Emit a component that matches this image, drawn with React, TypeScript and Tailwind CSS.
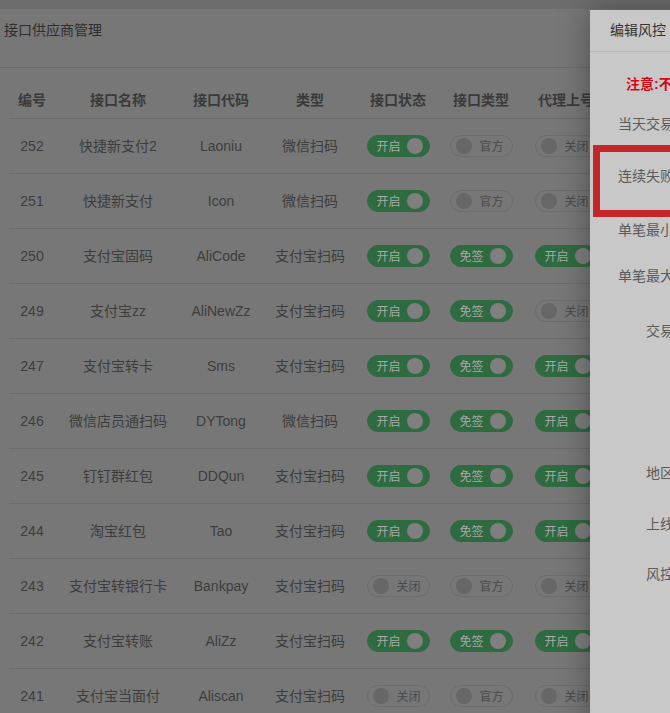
import React from "react";

type Row = {
  id: string;
  name: string;
  code: string;
  type: string;
  status: boolean;
  kind: boolean;
  agent: boolean;
};

const rows: Row[] = [
  { id: "252", name: "快捷新支付2", code: "Laoniu", type: "微信扫码", status: true, kind: false, agent: false },
  { id: "251", name: "快捷新支付", code: "Icon", type: "微信扫码", status: true, kind: false, agent: false },
  { id: "250", name: "支付宝固码", code: "AliCode", type: "支付宝扫码", status: true, kind: true, agent: true },
  { id: "249", name: "支付宝zz", code: "AliNewZz", type: "支付宝扫码", status: true, kind: true, agent: false },
  { id: "247", name: "支付宝转卡", code: "Sms", type: "支付宝扫码", status: true, kind: true, agent: true },
  { id: "246", name: "微信店员通扫码", code: "DYTong", type: "微信扫码", status: true, kind: true, agent: true },
  { id: "245", name: "钉钉群红包", code: "DDQun", type: "支付宝扫码", status: true, kind: true, agent: true },
  { id: "244", name: "淘宝红包", code: "Tao", type: "支付宝扫码", status: true, kind: true, agent: true },
  { id: "243", name: "支付宝转银行卡", code: "Bankpay", type: "支付宝扫码", status: false, kind: false, agent: false },
  { id: "242", name: "支付宝转账", code: "AliZz", type: "支付宝扫码", status: true, kind: true, agent: true },
  { id: "241", name: "支付宝当面付", code: "Aliscan", type: "支付宝扫码", status: false, kind: false, agent: false },
];

function Switch({ on, onText, offText }: { on: boolean; onText: string; offText: string }) {
  if (on) {
    return (
      <div className="flex h-[22px] w-[63px] items-center justify-between rounded-full border border-[#2f6b40] bg-[#2f6b40] pl-[9px] pr-[6px]">
        <span className="pt-[2px] text-[12px] leading-none text-[#a9a9a9]">{onText}</span>
        <span className="h-[16px] w-[16px] rounded-full bg-[#7f7f7f]" />
      </div>
    );
  }
  return (
    <div className="flex h-[22px] w-[63px] items-center rounded-full border border-[#6c6c6c] pl-[5px] pr-[8px]">
      <span className="h-[16px] w-[16px] rounded-full bg-[#676767]" />
      <span className="ml-auto pt-[2px] text-[12px] leading-none text-[#4a4a4a]">{offText}</span>
    </div>
  );
}

const cols = "grid grid-cols-[46px_126px_80px_98px_78px_88px_82px_120px]";

export default function App() {
  return (
    <div
      className="relative h-[713px] w-[670px] overflow-hidden bg-[#777777]"
      style={{ fontFamily: '"Liberation Sans", "Noto Sans CJK SC", sans-serif' }}
    >
      <div className="h-[9px] bg-[#6d6d6d]" />
      <div className="flex h-[59px] border-b border-[#6b6b6b] pl-[4px] pt-[11px]">
        <span className="text-[14px] leading-[20px] text-[#2e2e2e]">接口供应商管理</span>
      </div>
      <div className="pl-[9px] pt-[15px]">
        <div className={`${cols} h-[36px] items-center border-b border-[#6b6b6b] text-center text-[14px] font-bold text-[#3a3a3a]`}>
          <div>编号</div>
          <div>接口名称</div>
          <div>接口代码</div>
          <div>类型</div>
          <div>接口状态</div>
          <div>接口类型</div>
          <div className="whitespace-nowrap">代理上号</div>
          <div>操作</div>
        </div>
        {rows.map((r) => (
          <div
            key={r.id}
            className={`${cols} h-[55px] items-center border-b border-[#6b6b6b] text-center text-[14px] text-[#3d3d3d]`}
          >
            <div>{r.id}</div>
            <div className="whitespace-nowrap">{r.name}</div>
            <div>{r.code}</div>
            <div className="whitespace-nowrap">{r.type}</div>
            <div className="flex justify-center">
              <Switch on={r.status} onText="开启" offText="关闭" />
            </div>
            <div className="flex justify-center">
              <Switch on={r.kind} onText="免签" offText="官方" />
            </div>
            <div className="flex justify-center">
              <Switch on={r.agent} onText="开启" offText="关闭" />
            </div>
            <div />
          </div>
        ))}
      </div>

      {/* dialog */}
      <div className="absolute left-[590px] top-[10px] h-[720px] w-[500px] bg-[#c8c8c8] shadow-[0_0_30px_rgba(0,0,0,0.35)]">
        <div className="flex h-[42px] items-center border-b border-[#b6b6b6] pl-[20px]">
          <span className="text-[14px] text-[#333333]">编辑风控</span>
        </div>
        <div className="pl-[36px] pt-[20px]">
          <span className="whitespace-nowrap text-[14px] font-bold leading-[20px] text-[#cf0a18]">注意:不填写或填写0则表示不限制</span>
        </div>
        <div className="mt-[18px] flex flex-col text-[14px] leading-[20px] text-[#5a5a5a]">
          <div className="h-[52px]"><div className="w-[112px] text-right">当天交易总额</div></div>
          <div className="h-[54px]"><div className="w-[112px] text-right">连续失败次数</div></div>
          <div className="h-[46px]"><div className="w-[112px] text-right">单笔最小金额</div></div>
          <div className="h-[55px]"><div className="w-[112px] text-right">单笔最大金额</div></div>
          <div className="h-[142px]"><div className="w-[112px] text-right">交易方式</div></div>
          <div className="h-[51px]"><div className="w-[112px] text-right">地区限制</div></div>
          <div className="h-[50px]"><div className="w-[112px] text-right">上线时间</div></div>
          <div className="h-[50px]"><div className="w-[112px] text-right">风控状态</div></div>
        </div>
        <div className="absolute left-[3px] top-[135px] h-[72px] w-[300px] border-[7px] border-[#c4262a]" />
      </div>
    </div>
  );
}
